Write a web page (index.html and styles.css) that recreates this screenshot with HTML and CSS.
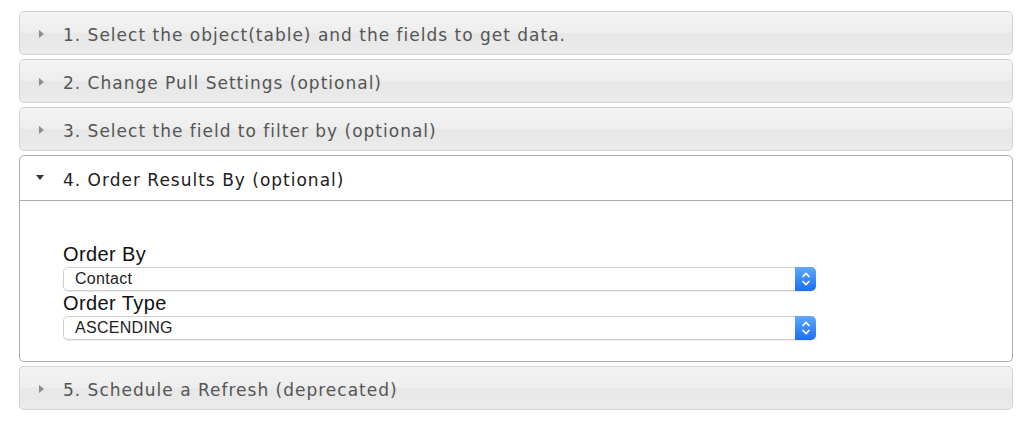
FILE: index.html
```html
<!DOCTYPE html>
<html>
<head>
<meta charset="utf-8">
<link rel="stylesheet" href="styles.css">
</head>
<body>
<div class="accordion">
  <div class="hdr"><span class="tri-r"></span>1. Select the object(table) and the fields to get data.</div>
  <div class="hdr"><span class="tri-r"></span>2. Change Pull Settings (optional)</div>
  <div class="hdr"><span class="tri-r"></span>3. Select the field to filter by (optional)</div>
  <div class="hdr active"><span class="tri-d"></span>4. Order Results By (optional)</div>
  <div class="content">
    <div class="label">Order By</div>
    <div class="select"><span class="val">Contact</span><span class="stepper"><svg width="10" height="16" viewBox="0 0 10 16"><path d="M1.5 6 L5 2.5 L8.5 6 M1.5 10 L5 13.5 L8.5 10" fill="none" stroke="#fff" stroke-width="1.6"/></svg></span></div>
    <div class="label">Order Type</div>
    <div class="select"><span class="val">ASCENDING</span><span class="stepper"><svg width="10" height="16" viewBox="0 0 10 16"><path d="M1.5 6 L5 2.5 L8.5 6 M1.5 10 L5 13.5 L8.5 10" fill="none" stroke="#fff" stroke-width="1.6"/></svg></span></div>
  </div>
  <div class="hdr"><span class="tri-r"></span>5. Schedule a Refresh (deprecated)</div>
</div>
</body>
</html>
```

FILE: styles.css
```css
html, body {
  margin: 0;
  padding: 0;
  background: #fff;
}
.accordion {
  padding: 11px 11px 0 19px;
  display: flex;
  flex-direction: column;
  gap: 4px;
}
.hdr {
  height: 44px;
  box-sizing: border-box;
  border: 1px solid #d3d3d3;
  border-radius: 5px;
  background: linear-gradient(#f3f3f3 0%, #eeeeee 48%, #e7e7e7 52%, #ebebeb 100%);
  color: #555;
  font-family: "DejaVu Sans", Verdana, sans-serif;
  font-size: 17px;
  letter-spacing: 1px;
  display: flex;
  align-items: center;
  padding-left: 43px;
  padding-top: 3px;
  position: relative;
}
.hdr.active {
  background: #fff;
  border-color: #aaa;
  color: #212121;
  border-radius: 5px 5px 0 0;
  height: 46px;
}
.content {
  margin-top: -4px;
  border: 1px solid #aaa;
  border-top: 0;
  border-radius: 0 0 5px 5px;
  background: #fff;
  padding: 43px 0 19px 43px;
  color: #222;
}
.tri-r {
  position: absolute;
  left: 19px;
  top: 18px;
  width: 0;
  height: 0;
  border-top: 4px solid transparent;
  border-bottom: 4px solid transparent;
  border-left: 5px solid #8c8c8c;
}
.tri-d {
  position: absolute;
  left: 16px;
  top: 19px;
  width: 0;
  height: 0;
  border-left: 4.5px solid transparent;
  border-right: 4.5px solid transparent;
  border-top: 5px solid #333;
}
.label {
  font-family: "Liberation Sans", Arial, sans-serif;
  font-size: 20px;
  letter-spacing: 0.4px;
  line-height: 21px;
  color: #111;
  margin-bottom: 2px;
}
.select {
  width: 753px;
  height: 24px;
  box-sizing: border-box;
  border: 1px solid #cfcfcf;
  border-radius: 5px;
  display: flex;
  align-items: center;
  justify-content: space-between;
  margin-bottom: 2px;
  box-shadow: 0 1px 1px rgba(0,0,0,0.08);
}
.val {
  font-family: "Liberation Sans", Arial, sans-serif;
  font-size: 16px;
  letter-spacing: 0.3px;
  color: #222;
  padding-left: 11px;
}
.stepper {
  width: 21px;
  height: 24px;
  margin: -1px -1px -1px 0;
  border-radius: 0 5px 5px 0;
  background: linear-gradient(#5fa8ff, #1a6ef4);
  display: flex;
  align-items: center;
  justify-content: center;
}
```
